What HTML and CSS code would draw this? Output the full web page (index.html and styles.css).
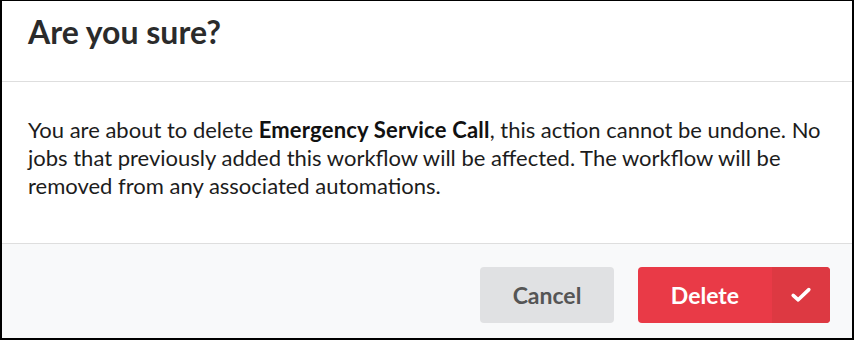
FILE: index.html
```html
<!DOCTYPE html>
<html>
<head>
<meta charset="utf-8">
<link rel="stylesheet" href="styles.css">
</head>
<body>
<div class="modal">
  <div class="modal-header">
    <h2 class="modal-title">Are you sure?</h2>
  </div>
  <div class="modal-body">
    <p>You are about to delete <strong>Emergency Service Call</strong>, this action cannot be undone. No jobs that previously added this workflow will be affected. The workflow will be removed from any associated automations.</p>
  </div>
  <div class="modal-footer">
    <button class="btn btn-cancel">Cancel</button>
    <button class="btn btn-delete"><span class="btn-label">Delete</span><span class="btn-icon"><svg width="22" height="18" viewBox="0 0 22 18"><path d="M3.2 9.4 L8.2 13.8 L18.8 3.6" fill="none" stroke="#fff" stroke-width="3.6" stroke-linecap="round" stroke-linejoin="round"/></svg></span></button>
  </div>
</div>
</body>
</html>
```
FILE: styles.css
```css
* { box-sizing: border-box; }
html, body { margin: 0; padding: 0; }
body { font-family: Lato, "Open Sans", sans-serif; background: #fff; }
.modal {
  width: 854px;
  height: 340px;
  border-top: 1px solid #000;
  border-left: 2px solid #000;
  border-right: 2px solid #000;
  border-bottom: 2px solid #000;
  display: flex;
  flex-direction: column;
  background: #fff;
}
.modal-header {
  height: 81px;
  border-bottom: 1px solid #dedede;
  padding: 15px 26px 0;
}
.modal-title {
  margin: 0;
  font-size: 32px;
  font-weight: 700;
  color: #2b2b2b;
  line-height: 32px;
}
.modal-body {
  height: 162px;
  border-bottom: 1px solid #dedede;
  padding: 34px 10px 0 26px;
}
.modal-body p {
  margin: 0;
  font-size: 22px;
  line-height: 28px;
  color: #1c1c1c;
}
.modal-body strong { font-weight: 700; color: #111; letter-spacing: 0.2px; }
.modal-footer {
  flex: 1;
  background: #f8f9fa;
  display: flex;
  justify-content: flex-end;
  align-items: flex-start;
  padding: 23px 22px 0;
  gap: 24px;
}
.btn {
  height: 56px;
  border: none;
  border-radius: 4px;
  font-family: Lato, "Open Sans", sans-serif;
  font-size: 23px;
  font-weight: 700;
  padding: 0;
  cursor: pointer;
}
.btn-cancel {
  width: 134px;
  background: #e0e1e3;
  color: #555;
}
.btn-delete {
  width: 192px;
  background: #e93a47;
  color: #fff;
  display: flex;
  overflow: hidden;
}
.btn-label {
  flex: 1;
  display: flex;
  align-items: center;
  justify-content: center;
}
.btn-icon {
  width: 58px;
  background: #dd3942;
  display: flex;
  align-items: center;
  justify-content: center;
}
```
